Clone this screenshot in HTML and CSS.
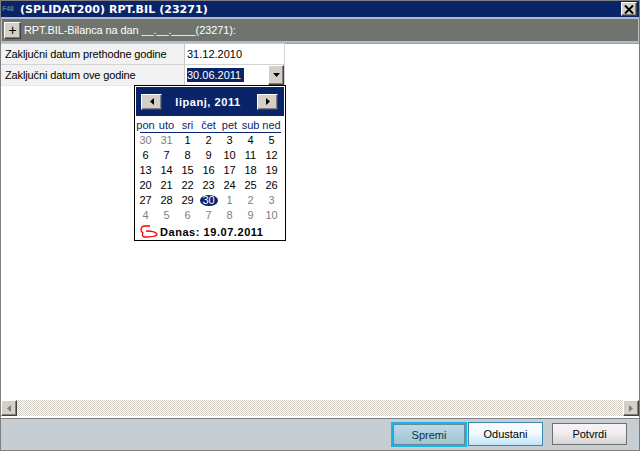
FILE: index.html
```html
<!DOCTYPE html>
<html lang="hr">
<head>
<meta charset="utf-8">
<title>RPT.BIL</title>
<link rel="stylesheet" href="styles.css">
</head>
<body>
<div class="window">
  <div class="titlebar">
    <span class="appicon">F48</span>
    <span class="title">(SPLIDAT200) RPT.BIL (23271)</span>
    <span class="close raised"><svg width="10" height="9" viewBox="0 0 10 9"><path d="M1 0.5L9 8.5M9 0.5L1 8.5" stroke="#000" stroke-width="2" fill="none"/></svg></span>
  </div>
  <div class="panelhead">
    <span class="plus raised">+</span>
    <span class="paneltitle">RPT.BIL-Bilanca na dan __.__.____(23271):</span>
  </div>
  <div class="content">
    <div class="grid">
      <div class="lab">Zaključni datum prethodne godine</div>
      <div class="val">31.12.2010</div>
      <div class="lab lastrow">Zaključni datum ove godine</div>
      <div class="val lastrow combo"><span class="sel">30.06.2011</span><span class="drop raised"><svg width="7" height="4" viewBox="0 0 7 4"><path d="M0 0H7L3.5 4Z" fill="#000"/></svg></span></div>
    </div>
    <div class="calendar">
      <div class="calhead">
        <span class="nav raised"><svg width="4" height="7" viewBox="0 0 4 7"><path d="M4 0V7L0 3.5Z" fill="#000"/></svg></span>
        <span class="month">lipanj, 2011</span>
        <span class="nav raised"><svg width="4" height="7" viewBox="0 0 4 7"><path d="M0 0V7L4 3.5Z" fill="#000"/></svg></span>
      </div>
      <div class="week names"><span>pon</span><span>uto</span><span>sri</span><span>čet</span><span>pet</span><span>sub</span><span>ned</span></div>
      <div class="rule"></div>
      <div class="week"><span class="off">30</span><span class="off">31</span><span>1</span><span>2</span><span>3</span><span>4</span><span>5</span></div>
      <div class="week"><span>6</span><span>7</span><span>8</span><span>9</span><span>10</span><span>11</span><span>12</span></div>
      <div class="week"><span>13</span><span>14</span><span>15</span><span>16</span><span>17</span><span>18</span><span>19</span></div>
      <div class="week"><span>20</span><span>21</span><span>22</span><span>23</span><span>24</span><span>25</span><span>26</span></div>
      <div class="week"><span>27</span><span>28</span><span>29</span><span class="today"><i>30</i></span><span class="off">1</span><span class="off">2</span><span class="off">3</span></div>
      <div class="week"><span class="off">4</span><span class="off">5</span><span class="off">6</span><span class="off">7</span><span class="off">8</span><span class="off">9</span><span class="off">10</span></div>
      <div class="todayline">
        <svg width="18" height="13" viewBox="0 0 18 13"><path d="M10 1H5C2 1 1 3 1 5C1 7 2 7 3 8C2 10 2 12 5 12C9 12 14 12 17 10C17 7 12 6 6 6" stroke="#f00" stroke-width="1.300" fill="none"/></svg>
        <b>Danas: 19.07.2011</b>
      </div>
    </div>
  </div>
  <div class="hscroll">
    <span class="arrow raised"><svg width="4" height="7" viewBox="0 0 4 7"><path d="M4 0V7L0 3.5Z" fill="#7a7f80"/></svg></span>
    <span class="track"></span>
    <span class="arrow raised"><svg width="4" height="7" viewBox="0 0 4 7"><path d="M0 0V7L4 3.5Z" fill="#7a7f80"/></svg></span>
  </div>
  <div class="footer">
    <button class="btn spremi">Spremi</button>
    <button class="btn odustani">Odustani</button>
    <button class="btn potvrdi">Potvrdi</button>
  </div>
</div>
</body>
</html>
```
FILE: styles.css
```css
* { box-sizing: border-box; }
html, body { margin: 0; padding: 0; }
body { width: 640px; height: 451px; font-family: "Liberation Sans", sans-serif; font-size: 11px; color: #000; overflow: hidden; }
.window { width: 640px; height: 451px; display: flex; flex-direction: column; border: 1px solid #808080; border-right-color: #7c7c7c; background: #fff; }
.raised { display: inline-flex; align-items: center; justify-content: center; background: #d4d0c8; border: 1px solid; border-color: #fff #404040 #404040 #fff; box-shadow: inset -1px -1px 0 #808080; }
.titlebar { height: 16px; flex: none; background: #0a246a; color: #fff; display: flex; align-items: center; padding: 0 2px 0 1px; }
.appicon { width: 18px; font: bold 7px "Liberation Mono", monospace; color: #6c7486; letter-spacing: -0.3px; }
.title { font: bold 11px "DejaVu Sans", sans-serif; flex: 1; letter-spacing: 0.05px; }
.close { width: 16px; height: 14px; }
.panelhead { height: 26px; flex: none; background: #70746f; background-image: radial-gradient(#7b7f7a 0.5px, transparent 0.6px); background-size: 2px 2px; border: 1px solid #b4bbc0; border-width: 2px 1px; box-shadow: 0 1px 0 #9aa2a6; color: #fff; display: flex; align-items: center; padding-left: 2px; gap: 3px; }
.plus { width: 17px; height: 17px; font: 14px/1 "Liberation Sans", sans-serif; color: #000; }
.paneltitle { font-size: 11px; letter-spacing: -0.1px; }
.content { flex: 1; position: relative; min-height: 0; }
.grid { display: grid; grid-template-columns: 184px 100px; grid-template-rows: 21px 21px; width: 284px; border-top: 1px solid #c4c8cb; }
.lab { background: #f1f1f1; border-bottom: 1px solid #d4d4d4; border-right: 1px solid #c8c8c8; padding-left: 4px; padding-bottom: 1px; display: flex; align-items: center; letter-spacing: -0.13px; }
.val { padding-left: 2px; padding-bottom: 1px; border-right: 1px solid #d4d4d4; border-bottom: 1px solid #d4d4d4; display: flex; align-items: center; }
.lab.lastrow, .val.lastrow { border-bottom-color: #e8e8e8; }
.combo { justify-content: space-between; padding-bottom: 0; }
.sel { background: #0a246a; color: #fff; line-height: 14px; height: 14px; width: 57px; white-space: nowrap; }
.drop { width: 16px; height: 20px; }
.calendar { position: absolute; left: 133px; top: 42px; width: 152px; height: 156px; background: #fff; border: 1px solid #000; padding: 1px; display: flex; flex-direction: column; }
.calhead { height: 29px; flex: none; background: #0a246a; color: #fff; display: flex; align-items: center; justify-content: space-between; padding: 0 6px 0 5px; }
.month { font-weight: bold; font-size: 11px; letter-spacing: 0.55px; margin-left: -3px; }
.nav { width: 21px; height: 16px; }
.week { display: grid; grid-template-columns: repeat(7, 21px); height: 15px; text-align: center; line-height: 15px; margin-left: -1px; flex: none; }
.week span { display: block; }
.names { color: #0a246a; height: 13px; line-height: 13px; margin-top: 3px; }
.rule { height: 1px; background: #0a246a; margin: 0 3px 0 4px; flex: none; }
.off { color: #808080; }
.today i { display: inline-block; width: 18px; height: 11px; line-height: 11px; font-style: normal; color: #fff; background: #0a246a; border-radius: 50%; }
.todayline { display: flex; align-items: center; height: 17px; padding-left: 4px; margin-top: 1px; gap: 2px; letter-spacing: 0.55px; }
.hscroll { height: 18px; flex: none; display: flex; background: #fff; }
.arrow { width: 16px; height: 16px; flex: none; }
.track { flex: 1; height: 16px; background: repeating-conic-gradient(#d4d0c8 0 25%, #fff 0 50%) 0 0 / 2px 2px; }
.footer { height: 32px; flex: none; background: #c6ced4; border-top: 1px solid #808080; display: flex; align-items: flex-start; padding: 4px 12px 0 0; justify-content: flex-end; }
.btn { font: 11px "Liberation Sans", sans-serif; color: #000; height: 22px; padding: 0; }
.spremi { width: 76px; height: 25px; margin-top: -1px; border: 2px solid #19b5e8; background: linear-gradient(#bddbe8, #9ec3cf); box-shadow: inset 0 0 0 1px #6a8a96; color: #12303c; }
.odustani { width: 75px; height: 24px; margin-top: -1px; margin-left: 1px; border: 1px solid #3d87b5; background: linear-gradient(#fafdff 0, #f4fafe 45%, #bfe4f8 100%); }
.potvrdi { width: 75px; margin-left: 9px; margin-top: 0; border: 1px solid #6e6e6e; background: linear-gradient(#f8f4f6 0, #f2eef0 40%, #d6d4d4 100%); }
```
